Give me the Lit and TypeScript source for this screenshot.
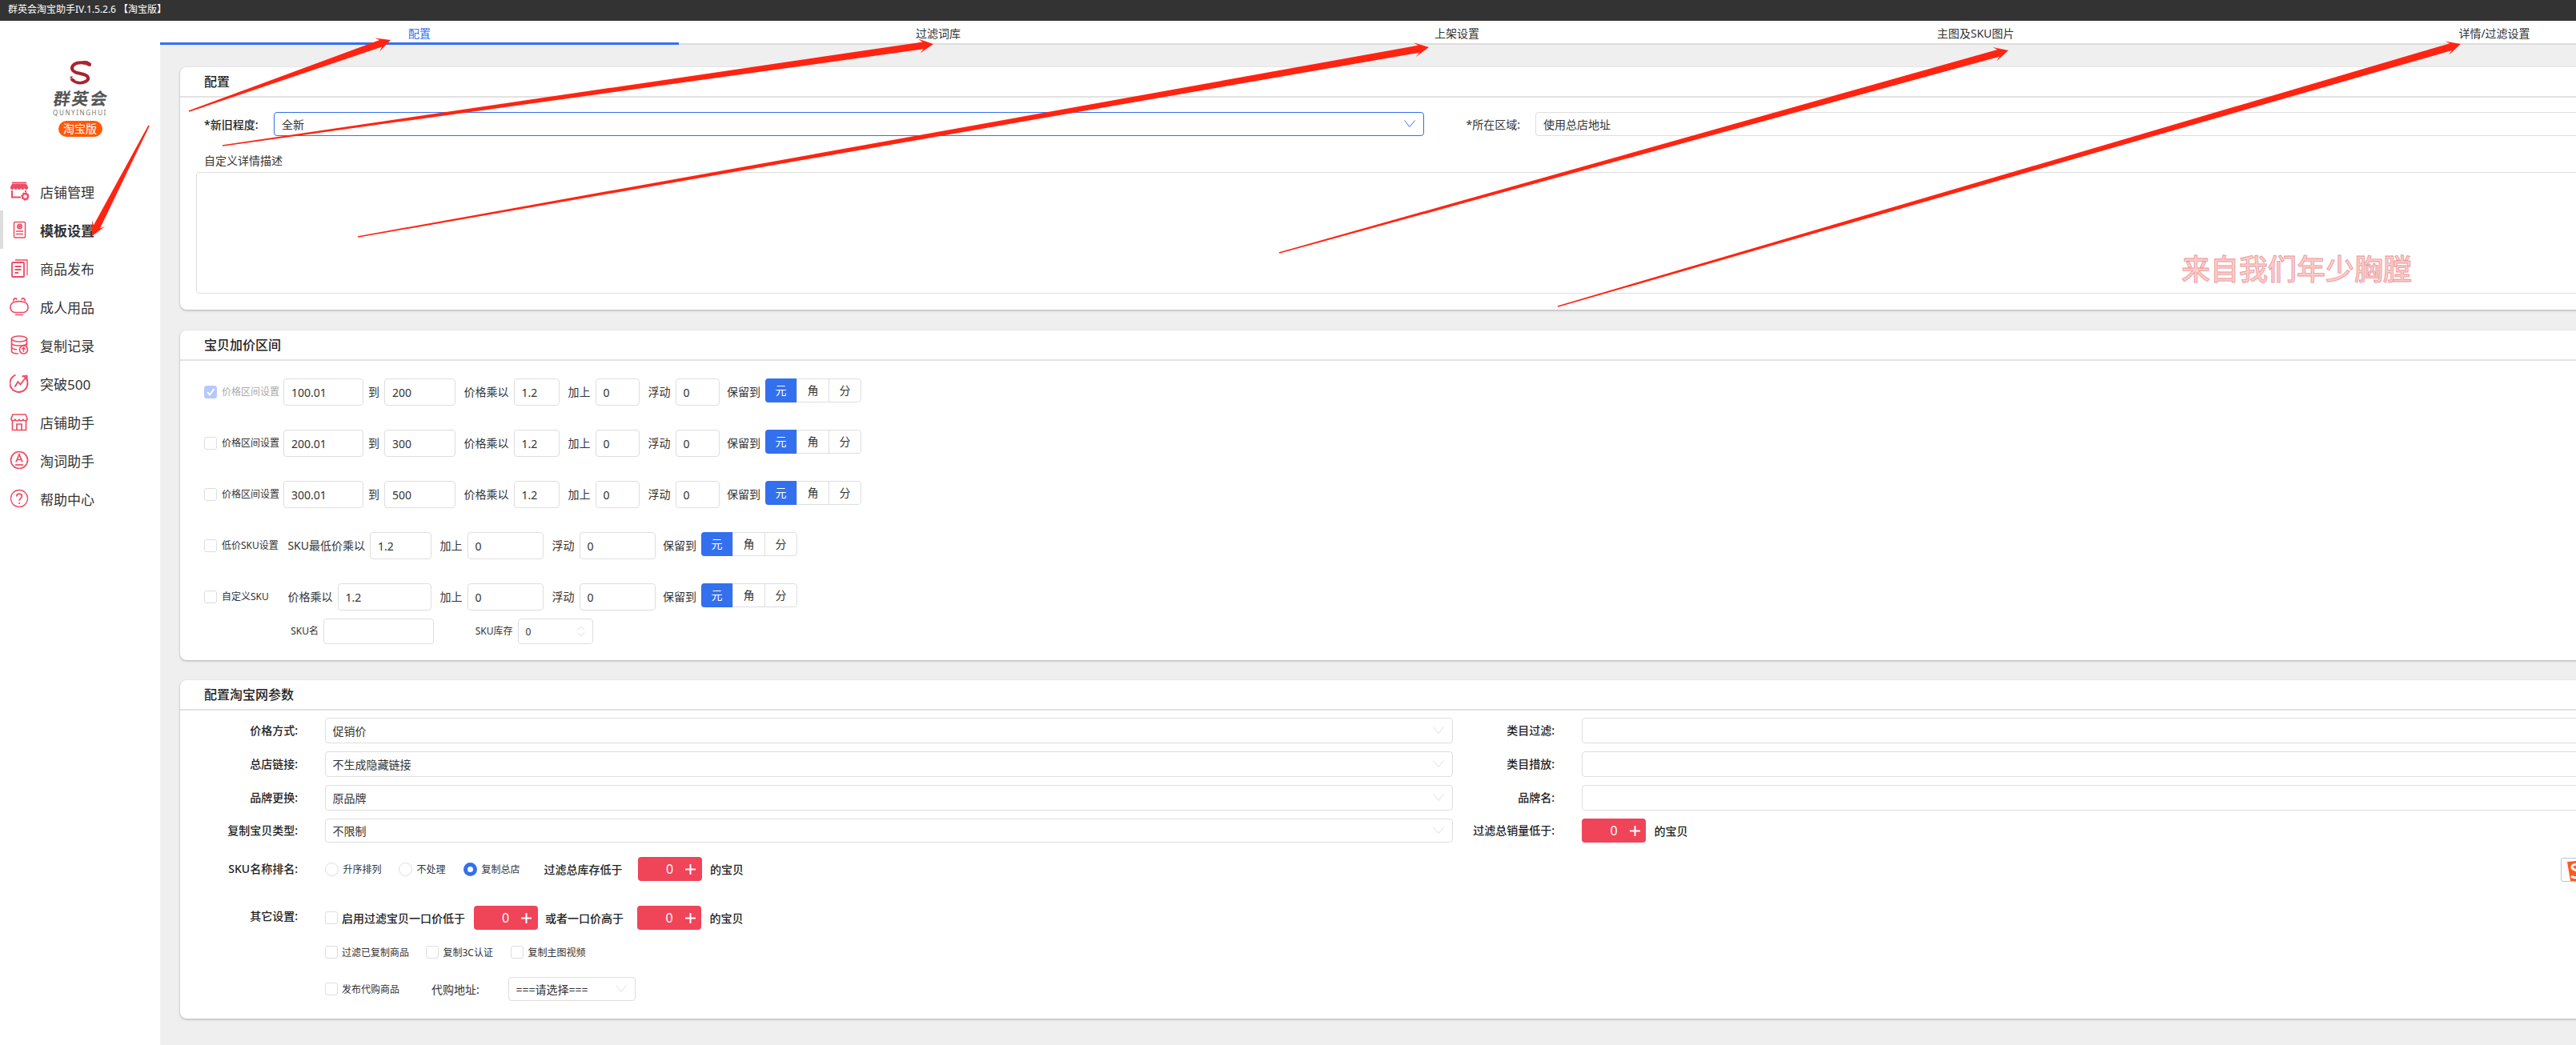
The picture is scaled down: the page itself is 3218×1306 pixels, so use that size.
import { LitElement, html, css, svg } from "lit";
import { customElement } from "lit/decorators.js";

const ICONS = [
  svg`<path d="M3 1.500h18" stroke-width="2"/><path d="M1 6.500 3 3h18l2 3.500v1.200a2.200 2.200 0 0 1-4.400 0 2.200 2.200 0 0 1-4.400 0 2.200 2.200 0 0 1-4.400 0 2.200 2.200 0 0 1-4.400 0 2.200 2.200 0 0 1-4.400 0z" fill="currentColor" stroke="none"/><path d="M3 11v8.500h11M20 11v2" stroke-width="2"/><circle cx="19.500" cy="18.500" r="3.500" stroke-width="2.400"/><circle cx="19.500" cy="18.500" r="5" stroke-width="1" stroke-dasharray="1.500 2.400"/>`,
  svg`<rect x="5.500" y="2.500" width="14" height="19.500" rx="1.500"/><circle cx="12.500" cy="8" r="2.800"/><circle cx="12.500" cy="8" r="1" fill="currentColor"/><path d="M8 14h9M8 17.500h9"/>`,
  svg`<rect x="3" y="5" width="15" height="18" rx="1" stroke-width="1.800"/><path d="M7 2h15v19" stroke-width="1.300"/><path d="M6.500 10h8M6.500 14h8M6.500 18h4.500" stroke-width="1.800"/>`,
  svg`<path d="M6 6.500c4-1.200 8-1.200 12 0 3.500 1 5 3.500 5 6.500s-2 6-5.500 6.500h-11C3 19 1 16 1 13s1.500-5.500 5-6.500z" stroke-width="1.700"/><path d="M5 5.500C4.500 3 6 1.500 8 2l1.500 1.500M19 5.500c.5-2.500-1-4-3-3.500l-1.500 1.500M7 22.500h10" stroke-width="1.700"/>`,
  svg`<ellipse cx="12" cy="4.500" rx="9.500" ry="3.500" stroke-width="1.700"/><path d="M2.500 4.500v15c0 2 3 3.500 8.500 3.500M2.500 9.500c0 2 3 3.500 9.500 3.500s9.500-1.500 9.500-3.500v4M2.500 14.500c0 1.700 2.500 3 6.500 3.400M21.500 4.500v5" stroke-width="1.700"/><circle cx="17.500" cy="18" r="5" stroke-width="1.700"/><path d="M17.500 21v-5.500M15.300 17.500l2.200-2.200 2.200 2.200" stroke-width="1.500"/>`,
  svg`<path d="M17 2.500a11 11 0 1 1-9.500-.8" stroke-width="1.900"/><path d="M6.500 16.500 10.500 10l3 3.500L20 5" stroke-width="1.900"/><path d="M15.500 3.500 21.500 2.500 22 9" stroke-width="1.900"/>`,
  svg`<path d="M4 3h16l2 5a2.500 2.500 0 0 1-5 .5 2.500 2.500 0 0 1-5 0 2.500 2.500 0 0 1-5 0A2.500 2.500 0 0 1 2 8z" stroke-width="1.600"/><path d="M3.500 11v11.500h17V11" stroke-width="1.700"/><path d="M9 22.500V15h6v7.500" stroke-width="1.700"/>`,
  svg`<circle cx="12" cy="12" r="10.500" stroke-width="1.700"/><path d="M8 14.500 12 5l4 9.500M9.300 11.500h5.400" stroke-width="1.700"/><path d="M7 18h10" stroke-width="1.700"/>`,
  svg`<circle cx="12" cy="12" r="10.500" stroke-width="1.300"/><path d="M8.800 9.500c0-2 1.500-3.300 3.300-3.300s3.300 1.200 3.300 3c0 2.700-3.300 2.800-3.300 5.600" stroke-width="1.700"/><circle cx="12.100" cy="18" r="1.100" fill="currentColor" stroke="none"/>`,
];

const MENU = ["店铺管理", "模板设置", "商品发布", "成人用品", "复制记录", "突破500", "店铺助手", "淘词助手", "帮助中心"];
const TABS = ["配置", "过滤词库", "上架设置", "主图及SKU图片", "详情/过滤设置"];

const ARROWS: number[][] = [
  [236, 139, 488, 50],
  [278, 182, 1166, 55],
  [447, 296, 1785, 59],
  [1598, 316, 2509, 63],
  [1946, 383, 3074, 55],
  [186, 157, 115, 295],
];

function arrowPoints([sx, sy, tx, ty]: number[]) {
  const len = Math.hypot(tx - sx, ty - sy);
  const dx = (tx - sx) / len;
  const dy = (ty - sy) / len;
  const nx = -dy;
  const ny = dx;
  const at = (back: number, off: number) =>
    `${(tx - dx * back + nx * off).toFixed(1)},${(ty - dy * back + ny * off).toFixed(1)}`;
  const start = (off: number) => `${(sx + nx * off).toFixed(1)},${(sy + ny * off).toFixed(1)}`;
  return [
    start(0.8),
    at(13, 4.5),
    at(18, 9),
    `${tx},${ty}`,
    at(18, -9),
    at(13, -4.5),
    start(-0.8),
  ].join(" ");
}

@customElement("app-root")
export class AppRoot extends LitElement {
  static styles = css`
    :host {
      display: block;
      position: relative;
      width: 3218px;
      height: 1306px;
      overflow: hidden;
      background: #efefef;
      font-family: "Noto Sans", "Noto Sans CJK SC", sans-serif;
      font-size: 14px;
      color: #333;
    }
    * { box-sizing: border-box; }
    .titlebar { height: 26px; background: #333; color: #fff; font-size: 12px; line-height: 24px; padding-left: 10px; white-space: nowrap; }
    .layout { display: flex; height: 1280px; }
    .side { width: 200px; flex: none; background: #fff; }
    .logo { height: 189px; display: flex; flex-direction: column; align-items: center; padding-top: 50px; }
    .logo svg { display: block; width: 30px; height: 30px; }
    .logo-cn { font-size: 21px; line-height: 24px; margin-top: 5px; letter-spacing: 2px; color: #555; font-weight: 700; transform: skewX(-10deg); white-space: nowrap; padding-left: 2px; }
    .logo-en { font-size: 8px; line-height: 9px; letter-spacing: 1.6px; color: #777; margin-top: 1px; }
    .badge { width: 55px; height: 20px; margin-top: 6px; border-radius: 10px; background: #ff5a0a; color: #fff; font-size: 14px; line-height: 20px; text-align: center; white-space: nowrap; }
    .menu-item { height: 48px; display: flex; align-items: center; padding-left: 12px; font-size: 17px; color: #333; position: relative; white-space: nowrap; }
    .menu-item svg { width: 24px; height: 24px; margin-right: 14px; flex: none; color: #ee4b66; fill: none; stroke: currentColor; stroke-width: 1.500; }
    .menu-item.on { font-weight: 700; }
    .menu-item.on::before { content: ""; position: absolute; left: 0; top: 0; width: 4px; height: 48px; background: #ddd; }

    .main { width: 3240px; flex: none; }
    .tabs { display: flex; height: 30px; background: #fff; border-bottom: 2px solid #ddd; }
    .tab { flex: 1; text-align: center; line-height: 28px; padding-top: 2px; height: 30px; color: #333; white-space: nowrap; }
    .tab.on { color: #3370ee; border-bottom: 3px solid #3370ee; }
    .content { padding: 28px 25px 0; }
    .card { background: #fff; border-radius: 8px; box-shadow: 0 1px 3px rgba(0,0,0,.28); }
    .card-title { height: 38px; border-bottom: 2px solid #e2e2e2; padding-left: 30px; font-size: 16px; line-height: 36px; font-weight: 500; color: #222; }

    .c1 { height: 303px; }
    .c2 { height: 412px; margin-top: 26px; }
    .c3 { height: 423px; margin-top: 25px; }

    .ctrl { height: 32px; border: 1px solid #dedede; border-radius: 4px; background: #fff; display: flex; align-items: center; padding: 0 9px; color: #333; white-space: nowrap; position: relative; }
    .ctrl.h30 { height: 30px; }
    .ctrl.h34 { height: 34px; }
    .ctrl.focus { border-color: #3370ee; }
    .ctrl .chev { position: absolute; right: 10px; top: 50%; margin-top: -5px; width: 14px; height: 9px; fill: none; stroke: #ddd; stroke-width: 1; }
    .ctrl.focus .chev { stroke: #3370ee; }

    .cfg-row { display: grid; grid-template-columns: 87px 1437px 139px 1400px; padding: 18px 0 0 30px; align-items: center; }
    .strong { font-weight: 500; color: #222; white-space: nowrap; }
    .end { justify-self: end; white-space: nowrap; }
    .cfg-row .end { margin-right: 19px; }
    .desc-label { padding: 21px 0 0 30px; line-height: 20px; color: #333; }
    .desc { margin: 4px 20px 0; height: 152px; border: 1px solid #dedede; border-radius: 4px; }
    .watermark { position: absolute; left: 2725px; top: 314px; font-size: 36px; line-height: 46px; font-weight: 500; color: #ffcaca; -webkit-text-stroke: 0.8px #e59a9a; white-space: nowrap; }

    .price { padding: 22px 0 0 30px; }
    .grid { display: grid; align-items: center; margin-bottom: 30px; justify-items: stretch; }
    .grid.range { grid-template-columns: 22px 77px 100px 26px 89px 72.5px 57px 45px 55px 45px 55px 57.5px 120px; }
    .grid.low { grid-template-columns: 22px 82px 103px 77px 44.5px 95.5px 44.5px 95px 57.5px 120px; }
    .grid.custom { grid-template-columns: 22px 82px 62.5px 117.5px 44.5px 95.5px 44.5px 95px 57.5px 120px; margin-bottom: 10px; }
    .grid.sku { grid-template-columns: 149px 137.5px 105px 94.5px; margin-bottom: 0; font-size: 12px; }
    .lb { justify-self: end; margin-right: 6px; white-space: nowrap; line-height: 20px; }
    .sm { font-size: 12px; white-space: nowrap; line-height: 18px; justify-self: start; }
    .sm.off { color: #aaa; }
    .cb { width: 16px; height: 16px; border: 1px solid #dedede; border-radius: 3px; background: #fff; flex: none; display: block; }
    .cb.checked { background: #b4c9fb; border-color: #b4c9fb; }
    .cb svg { display: block; width: 14px; height: 14px; fill: none; stroke: #fff; stroke-width: 2; }
    .group { display: flex; height: 30px; align-self: start; border: 1px solid #dedede; border-radius: 4px; width: 120px; }
    .group span { flex: 1; text-align: center; line-height: 28px; border-left: 1px solid #dedede; }
    .group span:first-child { border-left: 0; background: #3370ee; color: #fff; margin: -1px 0 -1px -1px; line-height: 30px; border-radius: 4px 0 0 4px; }
    .num svg { position: absolute; right: 8px; top: 8px; width: 13px; height: 14px; fill: none; stroke: #ddd; stroke-width: 1; }

    .params { padding-top: 9px; }
    .pgrid { display: grid; grid-template-columns: 147px 33.500px 1409.500px 127px 34px 1400px; row-gap: 10px; align-items: center; }
    .pgrid .ctrl { grid-column: 3; }
    .pgrid .ctrl.r { grid-column: 6; }
    .pl { justify-self: end; font-weight: 500; color: #222; white-space: nowrap; line-height: 20px; }
    .pl.l1 { grid-column: 1; }
    .pl.l2 { grid-column: 4; }
    .right-inline { grid-column: 6; display: flex; align-items: center; }
    .line { display: flex; align-items: center; white-space: nowrap; }
    .lead { width: 147px; margin-right: 33.500px; text-align: right; font-weight: 500; color: #222; line-height: 20px; }
    .lead.top { align-self: flex-start; margin-top: 3px; }
    .l-sku { margin-top: 18px; height: 30px; }
    .l-other { margin-top: 31px; height: 30px; }
    .l-checks { margin-top: 20px; height: 16px; padding-left: 180.500px; }
    .l-last { margin-top: 23px; height: 30px; padding-left: 180.500px; }
    .counter { width: 80px; height: 30px; background: #f04459; border-radius: 4px; color: #fff; display: grid; grid-template-columns: 28px 24px 28px; align-items: center; justify-items: center; font-size: 16px; line-height: 30px; flex: none; }
    .counter svg { width: 13px; height: 13px; stroke: #fff; stroke-width: 2; grid-column: 3; justify-self: start; margin-left: 7.500px; }
    .counter b { grid-column: 2; font-weight: 400; }
    .radio { width: 17px; height: 17px; border-radius: 50%; border: 1px solid #dedede; background: #fff; flex: none; }
    .radio.on { border: 5px solid #3370ee; }
    .bold { font-weight: 500; color: #222; }
    .m6 { margin-left: 6px; }
    .t12 { font-size: 12px; }

    .sogou { position: absolute; left: 3199px; top: 1072px; width: 30px; height: 30px; border: 1px solid #b9c6d2; border-radius: 3px; background: #fff; padding: 2px 0 0 5px; }
    .sogou svg { display: block; width: 24px; height: 26px; }
    .overlay { position: absolute; left: 0; top: 0; width: 3218px; height: 1306px; pointer-events: none; }
    .overlay polygon { fill: #ff2412; }
  `;

  private chev(cls = "chev") {
    return html`<svg class=${cls} viewBox="0 0 14 9"><path d="M.5.5 7 8.500 13.500.5" /></svg>`;
  }

  private cb(checked = false) {
    return html`<span class="cb ${checked ? "checked" : ""}">${checked
      ? html`<svg viewBox="0 0 14 14"><path d="M3 7l3 3.500L11.500 3" /></svg>`
      : ""}</span>`;
  }

  private field(v: string, cls = "h34") {
    return html`<div class="ctrl ${cls}">${v}</div>`;
  }

  private tail(a: string, b: string) {
    return html`<span class="lb">加上</span>${this.field(a)}<span class="lb">浮动</span>${this.field(b)}<span class="lb">保留到</span>
      <div class="group"><span>元</span><span>角</span><span>分</span></div>`;
  }

  private range(on: boolean, from: string, to: string) {
    return html`<div class="grid range">
      ${this.cb(on)}<span class="sm ${on ? "off" : ""}">价格区间设置</span>
      ${this.field(from)}<span class="lb">到</span>${this.field(to)}
      <span class="lb">价格乘以</span>${this.field("1.2")}${this.tail("0", "0")}
    </div>`;
  }

  private counter() {
    return html`<div class="counter"><b>0</b><svg viewBox="0 0 13 13"><path d="M6.500 0v13M0 6.500h13" /></svg></div>`;
  }

  render() {
    return html`
      <div class="titlebar">群英会淘宝助手IV.1.5.2.6 【淘宝版】</div>
      <div class="layout">
        <aside class="side">
          <div class="logo">
            <svg viewBox="0 0 30 30" fill="none" stroke="#a8252f" stroke-linecap="round">
              <path d="M27 5C22 2 12 1 7 5c-4 4-2 8 4 10 6 1.500 13 2 14 6 1 4-5 6.500-10 6.500-3 0-7-1.500-10-4" stroke-width="4" />
              <path d="M18 1l5-.5 5 3M3 21l2-1" stroke-width="1.500" />
              <path d="M10 8c3-2 8-2 12-1" stroke="#fff" stroke-width="1" />
              <path d="M9 24c3 1.500 7 1.500 10 .5" stroke="#fff" stroke-width="1" />
            </svg>
            <div class="logo-cn">群英会</div>
            <div class="logo-en">QUNYINGHUI</div>
            <div class="badge">淘宝版</div>
          </div>
          <nav>
            ${MENU.map(
              (m, i) => html`<div class="menu-item ${i === 1 ? "on" : ""}">
                <svg viewBox="0 0 24 24">${ICONS[i]}</svg>${m}
              </div>`
            )}
          </nav>
        </aside>
        <main class="main">
          <div class="tabs">
            ${TABS.map((t, i) => html`<div class="tab ${i === 0 ? "on" : ""}">${t}</div>`)}
          </div>
          <div class="content">
            <section class="card c1">
              <div class="card-title">配置</div>
              <div class="cfg-row">
                <span class="strong">*新旧程度:</span>
                <div class="ctrl h30 focus">全新${this.chev()}</div>
                <span class="end">*所在区域:</span>
                <div class="ctrl h30">使用总店地址</div>
              </div>
              <div class="desc-label">自定义详情描述</div>
              <div class="desc"></div>
            </section>

            <section class="card c2">
              <div class="card-title">宝贝加价区间</div>
              <div class="price">
                ${this.range(true, "100.01", "200")}
                ${this.range(false, "200.01", "300")}
                ${this.range(false, "300.01", "500")}
                <div class="grid low">
                  ${this.cb()}<span class="sm">低价SKU设置</span>
                  <span class="lb">SKU最低价乘以</span>${this.field("1.2")}${this.tail("0", "0")}
                </div>
                <div class="grid custom">
                  ${this.cb()}<span class="sm">自定义SKU</span>
                  <span class="lb">价格乘以</span>${this.field("1.2")}${this.tail("0", "0")}
                </div>
                <div class="grid sku">
                  <span class="lb">SKU名</span><div class="ctrl"></div>
                  <span class="lb">SKU库存</span>
                  <div class="ctrl num">0<svg viewBox="0 0 13 14"><path d="M2 5.500 6.500 1 11 5.500M2 8.500 6.500 13 11 8.500" /></svg></div>
                </div>
              </div>
            </section>

            <section class="card c3">
              <div class="card-title">配置淘宝网参数</div>
              <div class="params">
                <div class="pgrid">
                  <span class="pl l1">价格方式:</span><div class="ctrl">促销价${this.chev()}</div>
                  <span class="pl l2">类目过滤:</span><div class="ctrl r"></div>
                  <span class="pl l1">总店链接:</span><div class="ctrl">不生成隐藏链接${this.chev()}</div>
                  <span class="pl l2">类目措放:</span><div class="ctrl r"></div>
                  <span class="pl l1">品牌更换:</span><div class="ctrl">原品牌${this.chev()}</div>
                  <span class="pl l2">品牌名:</span><div class="ctrl r"></div>
                  <span class="pl l1">复制宝贝类型:</span><div class="ctrl h30">不限制${this.chev()}</div>
                  <span class="pl l2">过滤总销量低于:</span>
                  <div class="right-inline">${this.counter()}<span class="bold" style="margin-left:10.5px">的宝贝</span></div>
                </div>
                <div class="line l-sku">
                  <span class="lead">SKU名称排名:</span>
                  <span class="radio"></span><span class="t12 m6" style="width:48px">升序排列</span>
                  <span class="radio" style="margin-left:21px"></span><span class="t12 m6" style="width:37px">不处理</span>
                  <span class="radio on" style="margin-left:21px"></span><span class="t12 m6" style="width:48px">复制总店</span>
                  <span class="bold" style="margin-left:30px;width:117px">过滤总库存低于</span>
                  ${this.counter()}<span class="bold" style="margin-left:10.5px">的宝贝</span>
                </div>
                <div class="line l-other">
                  <span class="lead top">其它设置:</span>
                  ${this.cb()}<span class="bold" style="margin-left:5.5px;width:164.500px">启用过滤宝贝一口价低于</span>
                  ${this.counter()}<span class="bold" style="margin-left:9.5px;width:115px">或者一口价高于</span>
                  ${this.counter()}<span class="bold" style="margin-left:10.5px">的宝贝</span>
                </div>
                <div class="line l-checks t12">
                  ${this.cb()}<span style="margin-left:5.5px;width:105px">过滤已复制商品</span>
                  ${this.cb()}<span style="margin-left:5.5px;width:84.500px">复制3C认证</span>
                  ${this.cb()}<span style="margin-left:5.5px">复制主图视频</span>
                </div>
                <div class="line l-last">
                  ${this.cb()}<span class="t12" style="margin-left:5.5px;width:112px">发布代购商品</span>
                  <span style="width:95.500px">代购地址:</span>
                  <div class="ctrl h30" style="width:159px">===请选择===${this.chev()}</div>
                </div>
              </div>
            </section>
          </div>
        </main>
      </div>
      <div class="watermark">来自我们年少胸膛</div>
      <div class="sogou">
        <svg viewBox="0 0 24 26"><path d="M2 2 24 0v26H6z" fill="#ff5a1f" /><path d="M18 7c-4-3-10-2-10 2s10 3 10 8-7 6-11 3" fill="none" stroke="#fff" stroke-width="3" /></svg>
      </div>
      <svg class="overlay" viewBox="0 0 3218 1306">
        ${ARROWS.map((a) => svg`<polygon points=${arrowPoints(a)} />`)}
      </svg>
    `;
  }
}
